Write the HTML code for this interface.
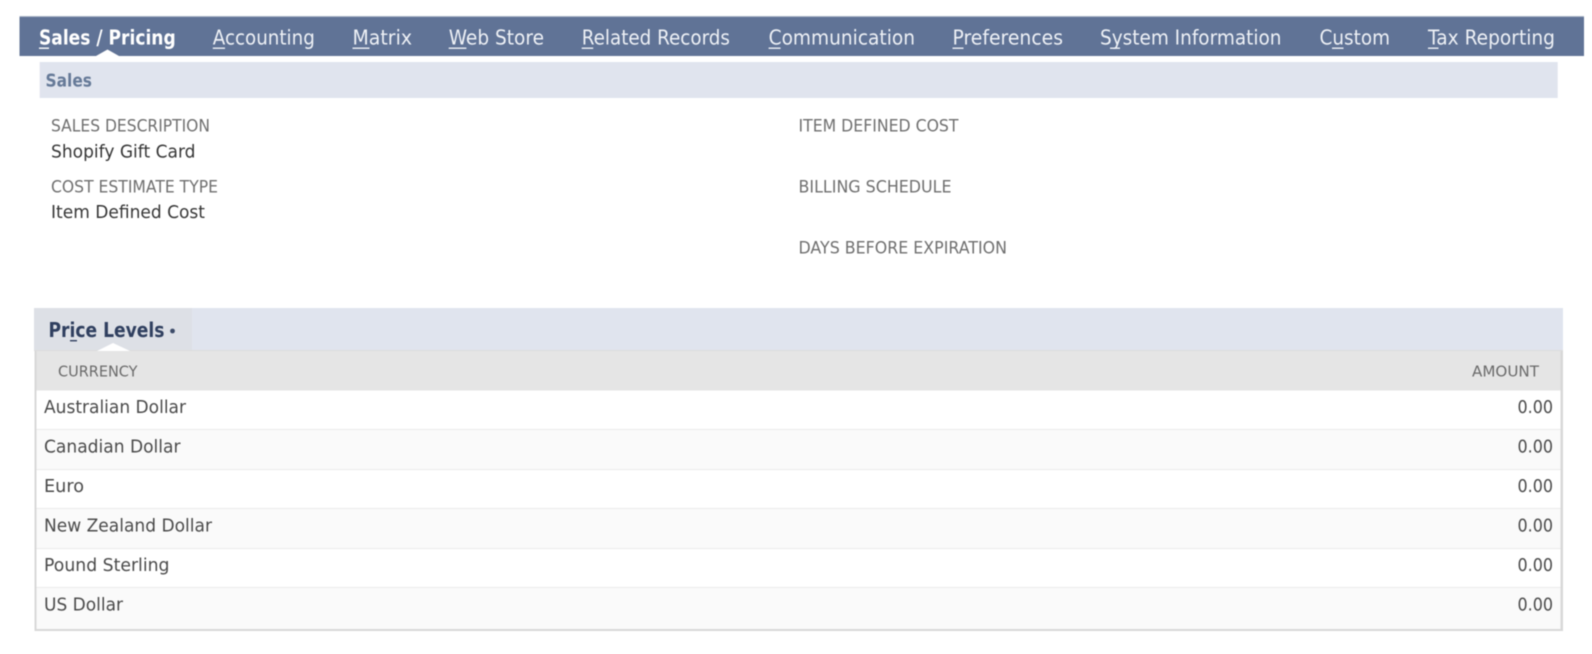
<!DOCTYPE html>
<html lang="en"><head><meta charset="utf-8"><title>Sales / Pricing</title>
<style>
html,body{margin:0;padding:0;background:#fff;width:1592px;height:654px;overflow:hidden}
svg{display:block;filter:blur(.45px)}
text{font-family:"DejaVu Sans","Liberation Sans",sans-serif}
.n{font-size:20px;fill:#eef1f6}
.l{font-size:16.5px;fill:#6f6f6f}
.v{font-size:17.5px;fill:#363636}
.h{font-size:15.5px;fill:#6a6a6a}
.r{font-size:17.5px;fill:#4a4a4a}
</style></head><body>
<svg width="1592" height="654" viewBox="0 0 1592 654" xmlns="http://www.w3.org/2000/svg">
<rect x="19.5" y="16.5" width="1564.5" height="39.5" fill="#607396"/>
<rect x="19.5" y="16" width="1564.5" height="1" fill="#a9b4c6"/>
<path d="M96 56 L107.5 49.5 L119 56 Z" fill="#fff"/>
<text class="n" x="39" y="44.5" textLength="136.7" lengthAdjust="spacingAndGlyphs" font-weight="700" style="fill:#fff">Sales / Pricing</text>
<text class="n" x="212.8" y="44.5" textLength="102" lengthAdjust="spacingAndGlyphs">Accounting</text>
<text class="n" x="352.5" y="44.5" textLength="59.5" lengthAdjust="spacingAndGlyphs">Matrix</text>
<text class="n" x="448.7" y="44.5" textLength="95.3" lengthAdjust="spacingAndGlyphs">Web Store</text>
<text class="n" x="581.7" y="44.5" textLength="148.3" lengthAdjust="spacingAndGlyphs">Related Records</text>
<text class="n" x="768.6" y="44.5" textLength="146.4" lengthAdjust="spacingAndGlyphs">Communication</text>
<text class="n" x="952.5" y="44.5" textLength="110.5" lengthAdjust="spacingAndGlyphs">Preferences</text>
<text class="n" x="1100" y="44.5" textLength="181.5" lengthAdjust="spacingAndGlyphs">System Information</text>
<text class="n" x="1319.5" y="44.5" textLength="70.5" lengthAdjust="spacingAndGlyphs">Custom</text>
<text class="n" x="1428" y="44.5" textLength="127" lengthAdjust="spacingAndGlyphs">Tax Reporting</text>
<g fill="#eef1f6">
<rect x="39" y="47.5" width="10" height="1.4" fill="#fff"/>
<rect x="212.8" y="47.5" width="12.2" height="1.4"/>
<rect x="352.5" y="47.5" width="17" height="1.4"/>
<rect x="448.7" y="47.5" width="17.7" height="1.4"/>
<rect x="581.7" y="47.5" width="11.5" height="1.4"/>
<rect x="768.6" y="47.5" width="12" height="1.4"/>
<rect x="952.5" y="47.5" width="11" height="1.4"/>
<rect x="1110" y="47.5" width="10" height="1.4"/>
<rect x="1332" y="47.5" width="11.5" height="1.4"/>
<rect x="1428" y="47.5" width="10.5" height="1.4"/>
</g>

<rect x="39.7" y="62" width="1518" height="36" fill="#e0e4ee"/>
<text x="45.5" y="86.5" font-size="18" font-weight="700" fill="#667a98" textLength="46.5" lengthAdjust="spacingAndGlyphs">Sales</text>

<text class="l" x="51" y="131.5" textLength="159" lengthAdjust="spacingAndGlyphs">SALES DESCRIPTION</text>
<text class="v" x="51" y="157.5" textLength="144.5" lengthAdjust="spacingAndGlyphs">Shopify Gift Card</text>
<text class="l" x="51" y="192.5" textLength="167" lengthAdjust="spacingAndGlyphs">COST ESTIMATE TYPE</text>
<text class="v" x="51" y="218" textLength="154" lengthAdjust="spacingAndGlyphs">Item Defined Cost</text>
<text class="l" x="798.5" y="131.5" textLength="160" lengthAdjust="spacingAndGlyphs">ITEM DEFINED COST</text>
<text class="l" x="798.5" y="192.5" textLength="153" lengthAdjust="spacingAndGlyphs">BILLING SCHEDULE</text>
<text class="l" x="798.5" y="253.5" textLength="208.5" lengthAdjust="spacingAndGlyphs">DAYS BEFORE EXPIRATION</text>

<rect x="34" y="308" width="1529" height="43" fill="#e0e4ee"/>
<rect x="34" y="308" width="158" height="43" fill="#dde0e6"/>
<text x="48.5" y="337" font-size="20" font-weight="700" fill="#2f3f5f" textLength="116" lengthAdjust="spacingAndGlyphs">Price Levels</text>
<circle cx="172.5" cy="331" r="2.4" fill="#3c4b69"/>
<rect x="70" y="340" width="7" height="1.4" fill="#2f3f5f"/>

<rect x="34.5" y="350" width="1528.5" height="281" fill="#d8d8d8"/>
<rect x="36.5" y="350" width="1524" height="279" fill="#fff"/>
<rect x="36.5" y="350" width="1524" height="40.5" fill="#e5e5e5"/>
<rect x="34" y="350" width="1529" height="1" fill="#dcdcdc"/>
<path d="M97 351 L113 343 L130 351 Z" fill="#fff"/>
<text class="h" x="58" y="376.5" textLength="79.5" lengthAdjust="spacingAndGlyphs">CURRENCY</text>
<text class="h" x="1472" y="376.5" textLength="67" lengthAdjust="spacingAndGlyphs">AMOUNT</text>

<rect x="36.5" y="429" width="1524" height="40" fill="#fafafa"/>
<rect x="36.5" y="508" width="1524" height="40" fill="#fafafa"/>
<rect x="36.5" y="587" width="1524" height="42" fill="#fafafa"/>
<g fill="#ebebeb">
<rect x="36.5" y="429" width="1524" height="1"/>
<rect x="36.5" y="469" width="1524" height="1"/>
<rect x="36.5" y="508" width="1524" height="1"/>
<rect x="36.5" y="548" width="1524" height="1"/>
<rect x="36.5" y="587" width="1524" height="1"/>
</g>

<text class="r" x="44" y="413" textLength="142" lengthAdjust="spacingAndGlyphs">Australian Dollar</text>
<text class="r" x="44" y="452.5" textLength="136.5" lengthAdjust="spacingAndGlyphs">Canadian Dollar</text>
<text class="r" x="44" y="492" textLength="40" lengthAdjust="spacingAndGlyphs">Euro</text>
<text class="r" x="44" y="531.5" textLength="168" lengthAdjust="spacingAndGlyphs">New Zealand Dollar</text>
<text class="r" x="44" y="571" textLength="125.5" lengthAdjust="spacingAndGlyphs">Pound Sterling</text>
<text class="r" x="44" y="610.5" textLength="79" lengthAdjust="spacingAndGlyphs">US Dollar</text>
<text class="r" x="1517.5" y="413" textLength="35.5" lengthAdjust="spacingAndGlyphs">0.00</text>
<text class="r" x="1517.5" y="452.5" textLength="35.5" lengthAdjust="spacingAndGlyphs">0.00</text>
<text class="r" x="1517.5" y="492" textLength="35.5" lengthAdjust="spacingAndGlyphs">0.00</text>
<text class="r" x="1517.5" y="531.5" textLength="35.5" lengthAdjust="spacingAndGlyphs">0.00</text>
<text class="r" x="1517.5" y="571" textLength="35.5" lengthAdjust="spacingAndGlyphs">0.00</text>
<text class="r" x="1517.5" y="610.5" textLength="35.5" lengthAdjust="spacingAndGlyphs">0.00</text>
</svg>
</body></html>
